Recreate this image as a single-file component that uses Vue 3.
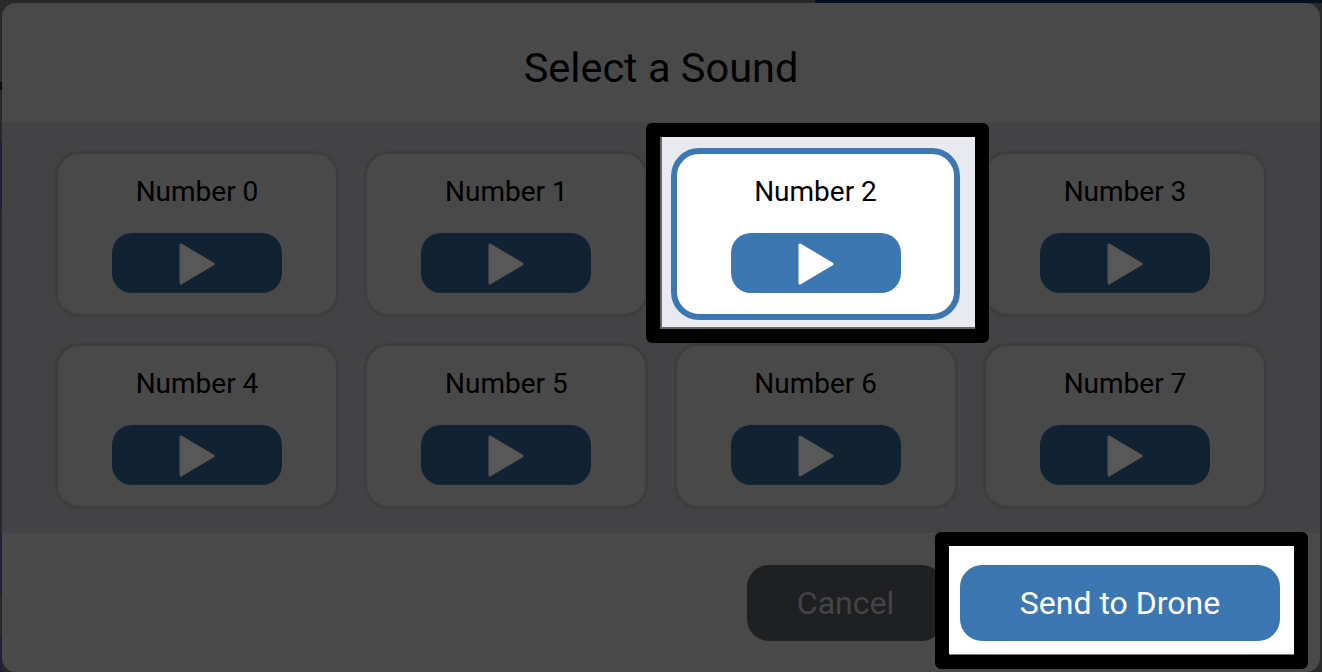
<template>
  <div class="page">
    <div class="modal">
      <div class="head"><h1>Select a Sound</h1></div>
      <div class="body">
        <div v-for="n in sounds" :key="n" class="card">
          <div class="name">Number {{ n }}</div>
          <button class="play">
            <svg width="40" height="46" viewBox="0 0 40 46"><polygon points="4,5 4,43 36,24" /></svg>
          </button>
        </div>
      </div>
      <div class="foot">
        <button class="btn cancel">Cancel</button>
      </div>
    </div>

    <!-- tour highlights over the dimmed modal -->
    <div class="spot spot-card">
      <div class="card lit">
        <div class="name">Number 2</div>
        <button class="play">
          <svg width="40" height="46" viewBox="0 0 40 46"><polygon points="4,5 4,43 36,24" /></svg>
        </button>
      </div>
    </div>
    <div class="spot spot-send">
      <button class="btn send">Send to Drone</button>
    </div>
  </div>
</template>

<script setup>
// slot 2 is drawn again, lit, by the highlight on top
const sounds = [0, 1, 2, 3, 4, 5, 6, 7]
</script>

<style>
html, body { margin: 0; overflow: hidden; background: #29292b; }
</style>

<style scoped>
.page {
  position: relative;
  width: 1322px;
  height: 672px;
  padding: 3px 2px 0;
  box-sizing: border-box;
  overflow: hidden;
  font-family: Roboto, "Liberation Sans", sans-serif;
  color: #000;
  background:
    linear-gradient(90deg, #29292b 0, #29292b 815px, #07101d 815px, #07101d 1322px) 0 0 / 1322px 3px no-repeat,
    linear-gradient(#0c0c0e, #0c0c0e) 0 82px / 2px 8px no-repeat,
    linear-gradient(#1b2436, #1b2436) 0 140px / 2px 70px no-repeat,
    linear-gradient(#1b2436, #1b2436) 0 532px / 2px 64px no-repeat,
    linear-gradient(#1b2436, #1b2436) 0 635px / 2px 37px no-repeat,
    #29292b;
}
.modal {
  height: 669px;
  display: flex;
  flex-direction: column;
  border-radius: 14px;
  overflow: hidden;
  background: #494949;
}
.head {
  height: 119px;
  flex: none;
  display: flex;
  align-items: center;
  justify-content: center;
}
h1 { margin: 10px 0 0; font-size: 41.5px; font-weight: 400; line-height: 48px; }
.body {
  height: 411px;
  flex: none;
  box-sizing: border-box;
  padding: 29px 53px 24px;
  background: #434345;
  display: grid;
  grid-template-columns: repeat(4, 1fr);
  grid-auto-rows: 166px;
  gap: 26px 25.33px;
}
.card {
  box-sizing: border-box;
  border: 3px solid #3e3e40;
  border-radius: 24px;
  background: #494949;
  display: flex;
  flex-direction: column;
  align-items: center;
}
.name { margin-top: 22px; font-size: 28px; line-height: 32px; }
.play {
  margin-top: 25px;
  width: 170px;
  height: 60px;
  flex: none;
  border: 0;
  padding: 0;
  border-radius: 20px;
  background: #112233;
  display: flex;
  align-items: center;
  justify-content: center;
}
.play svg { display: block; }
.play polygon { fill: #585858; stroke: #585858; stroke-width: 3; stroke-linejoin: round; }
.foot {
  flex: 1;
  display: flex;
  justify-content: flex-end;
  align-items: flex-start;
  padding: 32px 376px 0 0;
}
.btn {
  height: 76px;
  border: 0;
  border-radius: 22px;
  font-family: inherit;
  font-size: 32px;
  padding: 0;
}
.cancel { width: 197px; background: #1f2022; color: #444446; }
.send { width: 320px; flex: none; background: #3d77b1; color: #fff; }

.spot {
  position: absolute;
  box-sizing: border-box;
  border: 14px solid #000;
  border-radius: 6px;
  display: flex;
}
.spot-card {
  left: 646px;
  top: 123px;
  width: 343px;
  height: 220px;
  background: #e9eaf0;
  padding: 11px 14px 8px 11px;
  box-shadow: inset 2px -2px 0 #666;
}
.lit {
  width: 289px;
  height: 172px;
  flex: none;
  border: 6px solid #3d77b1;
  border-radius: 28px;
  background: #fff;
}
.lit .name { margin-top: 22px; }
.lit .play { margin-top: 25px; background: #3d77b1; }
.lit .play polygon { fill: #fff; stroke: #fff; }
.spot-send {
  left: 935px;
  top: 532px;
  width: 373px;
  height: 137px;
  background: #fff;
  padding: 19px 13px 0 11px;
  box-shadow: inset 0 -1px 0 #777;
}
</style>
